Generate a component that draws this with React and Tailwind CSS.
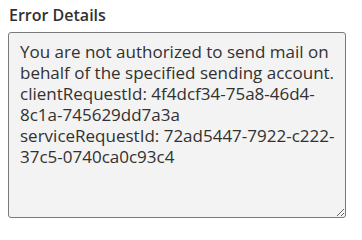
import React from "react";

const DETAILS = [
  "You are not authorized to send mail on behalf of the specified sending account.",
  "clientRequestId: 4f4dcf34-75a8-46d4-8c1a-745629dd7a3a",
  "serviceRequestId: 72ad5447-7922-c222-37c5-0740ca0c93c4",
].join("\n");

export default function App() {
  return (
    <div className="h-[227px] w-[362px] bg-white px-2 pt-[3px] font-['Segoe_UI','Open_Sans',sans-serif] text-[#323130]">
      <label htmlFor="error-details" className="block pl-px text-[16px] font-semibold leading-[24px] text-[#323130]">
        Error Details
      </label>
      <textarea
        id="error-details"
        readOnly
        value={DETAILS}
        className="mt-[5px] block h-[186px] w-[338px] resize-y rounded-[3px] border border-[#7a7a7a] bg-[#f3f3f3] pt-[8px] pr-[4px] pb-[8px] pl-[11px] text-[17px] leading-[21px] text-[#323130] outline-none"
      />
    </div>
  );
}
